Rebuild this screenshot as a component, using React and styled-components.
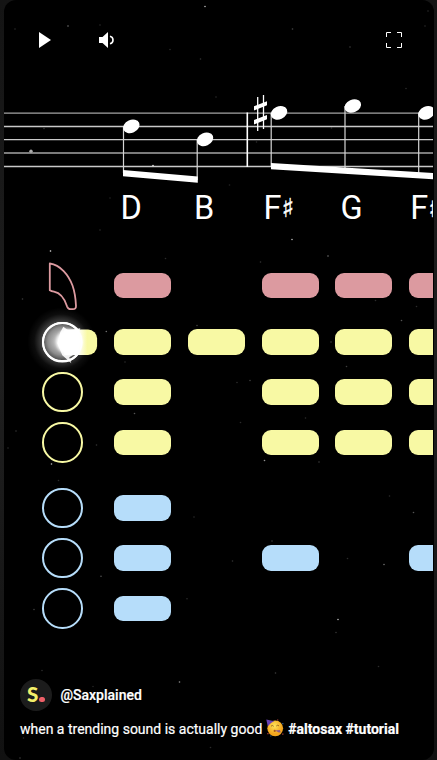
import React from "react";
import styled, { createGlobalStyle } from "styled-components";

const ROSE = "#dc9aa0";
const LEMON = "#f8f9a4";
const SKY = "#b6ddfa";

const GlobalStyle = createGlobalStyle`
  *, *::before, *::after { box-sizing: border-box; }
  body {
    margin: 0;
    font-family: Roboto, "Liberation Sans", sans-serif;
    color: #fff;
    overflow: hidden;
  }
`;

const Page = styled.div`
  height: 760px;
  padding: 0 3px 0 4px;
  background: linear-gradient(#141414, #1f1f1f 50%, #111);
`;

const Player = styled.main`
  position: relative;
  height: 760px;
  display: flex;
  flex-direction: column;
  overflow: hidden;
  border-radius: 12px;
  background: #000;
  border-right: 1px solid #000;
`;

const Sky = styled.svg`
  position: absolute;
  inset: 0;
  width: 429px;
  height: 760px;
  pointer-events: none;
`;

const Controls = styled.div`
  height: 80px;
  flex: none;
  display: flex;
  align-items: center;
  padding: 0 27px 0 28px;
`;

const IconButton = styled.button`
  width: 24px;
  height: 24px;
  padding: 0;
  border: 0;
  background: none;
  color: #fff;
  margin-left: ${(p) => p.$gap || "0"};
  svg { display: block; }
`;

const Staff = styled.svg`
  display: block;
  flex: none;
  width: 429px;
  height: 110px;
`;

const NoteNames = styled.div`
  display: grid;
  grid-template-columns: repeat(5, 73.75px);
  flex: none;
  height: 56px;
  padding-left: 115.6px;
  font-size: 32.5px;
  line-height: 36px;
`;

const NoteName = styled.span`
  display: flex;
  white-space: nowrap;
  margin-left: ${(p) => p.$shift || 0}px;
`;

const Sharp = styled.span`
  font-family: "DejaVu Sans", sans-serif;
  font-size: 26px;
  -webkit-text-stroke: 0.4px #fff;
`;

const Chart = styled.section`
  flex: none;
  display: flex;
  flex-direction: column;
  padding-top: 8.6px;
`;

const Lane = styled.div`
  height: ${(p) => p.$height || 50.35}px;
  margin-top: ${(p) => p.$gap || 0}px;
  display: grid;
  grid-template-columns: 71.8px repeat(5, 73.75px);
  align-items: center;
  padding-left: 38.3px;
  color: ${(p) => p.$tone};
`;

const KeyRing = styled.div`
  position: relative;
  width: 40.5px;
  height: 40.5px;
  border: 2px solid ${(p) => (p.$lit ? "#fff" : "currentColor")};
  border-radius: 50%;
`;

const Pad = styled.div`
  width: 57px;
  height: 25.5px;
  border-radius: 9px;
  background: ${(p) => (p.$on ? "currentColor" : "transparent")};
`;

const Flash = styled.svg`
  position: absolute;
  left: -24px;
  top: -22px;
  width: 84px;
  height: 80px;
`;

const Details = styled.footer`
  margin-top: auto;
  padding: 0 16px 21px;
`;

const Channel = styled.div`
  display: flex;
  align-items: center;
  gap: 8.5px;
  height: 32px;
  font-size: 14px;
  font-weight: 500;
  -webkit-text-stroke: 0.2px #fff;
`;

const Avatar = styled.div`
  display: flex;
  align-items: baseline;
  justify-content: center;
  width: 32px;
  height: 32px;
  border-radius: 50%;
  background: #1c1c1c;
  color: #f4f06a;
  font: 900 20.5px/30px Lato, sans-serif;
  -webkit-text-stroke: 0;
  gap: 1px;
`;

const Dot = styled.i`
  flex: none;
  width: 5.5px;
  height: 5.5px;
  border-radius: 50%;
  background: #ee6068;
`;

const Caption = styled.p`
  display: flex;
  align-items: center;
  margin: 8px 0 0;
  height: 20px;
  font-size: 14px;
  line-height: 20px;
  white-space: pre;
  -webkit-text-stroke: 0.2px #fff;
`;

const Tag = styled.b`
  font-weight: 700;
`;

const Emoji = styled.svg`
  width: 18px;
  height: 18px;
  margin: -3px 4.5px 0 3.5px;
`;

const stars = [
  [205, 6.5, 0.8], [68, 26, 0.6], [15, 29, 0.3], [100, 25, 0.3], [170, 49.5, 0.3], [200.5, 59, 0.35],
  [216, 97, 0.3], [292.5, 29, 0.45], [350, 47, 0.4], [406, 88.5, 0.3], [425, 26, 0.3], [428, 11, 0.3],
  [44, 128.5, 0.35], [153, 165.5, 0.9], [110, 198, 0.25], [100, 230, 0.3], [256.5, 142, 0.3], [331.5, 128, 0.3],
  [229.5, 185, 0.25], [292, 239.5, 0.8], [50.5, 251, 0.9], [165.5, 258.5, 0.3], [22.5, 299, 0.4],
  [106.3, 331.5, 0.6], [197, 325.5, 0.4], [260.5, 262, 0.35], [328, 256, 0.6], [375.5, 300.5, 0.3],
  [416.5, 306.5, 0.3], [401.5, 320.5, 0.5], [331, 342, 0.4], [346.5, 366.5, 0.4], [250, 380.5, 0.4],
  [237, 382.5, 0.3], [125, 362, 0.3], [134.5, 413.5, 0.5], [16, 431, 0.35], [8, 448, 0.3], [96.5, 445, 0.35],
  [51.5, 464, 0.8], [58.5, 480.5, 0.3], [305.5, 418, 0.3], [240.5, 422.5, 0.3], [264.5, 460.5, 0.7],
  [319, 462, 0.4], [194, 517, 0.3], [101, 576.3, 0.5], [187, 598.7, 0.3], [34, 609.5, 0.4],
  [389.5, 496, 0.3], [413.5, 512.5, 0.5], [272, 541, 0.4], [232.5, 561, 0.35], [384, 564.5, 0.6],
  [347.5, 558.5, 0.3], [338, 619.5, 0.8], [336, 632.5, 0.35], [179.5, 682, 0.7], [42, 670.5, 0.3],
  [93, 686.5, 0.25], [23.5, 738, 0.3], [20, 758, 0.4], [210.5, 747.5, 0.3], [275.5, 673, 0.4], [378.5, 666.5, 0.3],
];

const lanes = [
  { tone: ROSE, on: [1, 0, 1, 1, 1], thumb: true, height: 62 },
  { tone: LEMON, on: [1, 1, 1, 1, 1], lit: true },
  { tone: LEMON, on: [1, 0, 1, 1, 1] },
  { tone: LEMON, on: [1, 0, 1, 1, 1] },
  { tone: SKY, on: [1, 0, 0, 0, 0], gap: 15 },
  { tone: SKY, on: [1, 0, 1, 0, 1] },
  { tone: SKY, on: [1, 0, 0, 0, 0] },
];

const heads = [
  [131.3, 126.3, 173], [205, 139.3, 180], [279, 112.8, 167], [352.8, 106, 170], [426.5, 112.8, 174],
];

function Starfield() {
  return (
    <Sky viewBox="4 0 429 760">
      {stars.map(([x, y, o]) => (
        <circle key={`${x}-${y}`} cx={x} cy={y} r=".8" fill="#fff" opacity={o * o + 0.08} />
      ))}
    </Sky>
  );
}

function Score() {
  return (
    <Staff viewBox="4 80 429 110">
      {[113.2, 126.5, 139.6, 153, 166.5].map((y, i) => (
        <path key={y} d={`M4 ${y}H433`} stroke={i === 0 || i === 3 ? "#a5a5a5" : "#c9c9c9"} strokeWidth="1.3" />
      ))}
      <circle cx="31" cy="151.2" r="1.7" fill="#aaa" />
      <path d="M247.3 112.5V167" stroke="#fff" strokeWidth="1.6" />
      {heads.map(([x, y, end]) => (
        <g key={x} fill="#fff">
          <path d={`M${x - 7.8} ${y}V${end}`} stroke="#d5d5d5" strokeWidth="1.2" />
          <ellipse cx={x} cy={y} rx="8.6" ry="6.4" transform={`rotate(-24 ${x} ${y})`} />
        </g>
      ))}
      <path d="M123 170L197.8 176.6V182.8L123 176.2ZM271 163L433 173V179.2L271 169.3Z" fill="#fff" />
      <path d="M257.7 97V131M263.5 95V129" stroke="#fff" strokeWidth="1.3" />
      <path d="M254 106.2L267 101.2V105.3L254 110.4ZM254 120L267 115V119.2L254 124.4Z" fill="#fff" />
    </Staff>
  );
}

function ThumbKey() {
  return (
    <svg width="42" height="50" viewBox="42.5 260.5 42 50" fill="none" stroke="currentColor" strokeWidth="1.8" strokeLinejoin="round">
      <path d="M50.3 263C61 264.5 69 274.5 73 285C75.5 292 76.2 299 76.5 305.5Q76.6 308.6 73.5 308.6H71Q68.7 308.6 67.5 305.8C65 298 61.3 292.5 54.5 291.2Q52 290.8 50.3 289.7Z" />
    </svg>
  );
}

function KeyFlash() {
  return (
    <Flash viewBox="20.7 301.7 84 80">
      <defs>
        <radialGradient id="halo">
          <stop offset="0" stopColor="#fff" stopOpacity=".9" />
          <stop offset=".4" stopColor="#fff" stopOpacity=".55" />
          <stop offset=".6" stopColor="#fff" stopOpacity=".22" />
          <stop offset=".8" stopColor="#fff" stopOpacity=".05" />
          <stop offset="1" stopColor="#fff" stopOpacity="0" />
        </radialGradient>
        <linearGradient id="tail">
          <stop offset="0" stopColor="#fff" />
          <stop offset=".42" stopColor="#fff" />
          <stop offset=".7" stopColor={LEMON} />
        </linearGradient>
        <filter id="soft" x="-40%" y="-40%" width="180%" height="180%">
          <feGaussianBlur stdDeviation="1.8" />
        </filter>
      </defs>
      <circle cx="62" cy="341" r="34" fill="url(#halo)" />
      <path d="M65 329.2H88.8A9 9 0 0 1 97.8 338.2V345.7A9 9 0 0 1 88.8 354.7H65Z" fill="url(#tail)" />
      <ellipse cx="70" cy="341.5" rx="13" ry="12.5" fill="#fff" filter="url(#soft)" />
      <path d="M61 332L64 326.5L69 330L81 328L79 334L75 354L70 357L72 363L63 355L58 343Z" fill="#fff" opacity=".9" />
      <circle cx="63" cy="342" r="19.3" fill="none" stroke="#fff" strokeWidth="2" />
    </Flash>
  );
}

function PartyFace() {
  return (
    <Emoji viewBox="0 0 18 18">
      <defs>
        <radialGradient id="face" cx=".45" cy=".35">
          <stop offset="0" stopColor="#ffe45c" />
          <stop offset="1" stopColor="#f3a51d" />
        </radialGradient>
      </defs>
      <circle cx="9.2" cy="9.3" r="7.9" fill="url(#face)" />
      <path d="M.3.6L8.4 2.3Q4.4 3.4 1.8 7.6Z" fill="#6841b5" />
      <path d="M5 7.2Q6.4 5.7 7.7 7.3M10.3 7Q11.7 5.5 13 6.9" fill="none" stroke="#8a5714" strokeWidth=".8" />
      <circle cx="8.7" cy="11.9" r="1.1" fill="#a8561c" />
      <path d="M9 11.5L13.8 11L14.8 13.2L12.8 13.6Z" fill="#8b5a8e" />
      <path d="M11 .6h1.3v1H11zM1.2 14h1.4v1.3H1.2z" fill="#a83b36" />
      <path d="M16.2 4h1.2v1.3h-1.2zM4.2 16.5h1.2v1H4.2z" fill="#2d5f99" />
      <path d="M16 14.4h1.5v1.4H16z" fill="#963a35" />
    </Emoji>
  );
}

export default function App() {
  return (
    <>
      <GlobalStyle />
      <Page>
        <Player>
          <Starfield />
          <Controls>
            <IconButton aria-label="Play">
              <svg width="24" height="24" viewBox="0 0 24 24" fill="currentColor"><path d="M7 4L19 12L7 20Z" /></svg>
            </IconButton>
            <IconButton aria-label="Mute" $gap="40px">
              <svg width="24" height="24" viewBox="0 0 24 24" fill="currentColor">
                <path d="M3 9H6.5L12 4V20L6.5 15H3Z" />
                <path d="M14 8.2Q17 9 17 12T14 15.8" fill="none" stroke="currentColor" strokeWidth="1.6" />
              </svg>
            </IconButton>
            <IconButton aria-label="Full screen" $gap="auto">
              <svg width="24" height="24" viewBox="0 0 24 24" fill="none" stroke="currentColor">
                <path d="M4.5 9V4.5H9M15 4.5H19.5V9M19.5 15V19.5H15M9 19.5H4.5V15" />
              </svg>
            </IconButton>
          </Controls>
          <Score />
          <NoteNames>
            <NoteName $shift={0.8}>D</NoteName>
            <NoteName $shift={0.6}>B</NoteName>
            <NoteName $shift={-3.7}>F<Sharp>♯</Sharp></NoteName>
            <NoteName $shift={-0.4}>G</NoteName>
            <NoteName $shift={-4.3}>F<Sharp>♯</Sharp></NoteName>
          </NoteNames>
          <Chart>
            {lanes.map((lane, i) => (
              <Lane key={i} $tone={lane.tone} $gap={lane.gap} $height={lane.height}>
                {lane.thumb ? <ThumbKey /> : <KeyRing $lit={lane.lit}>{lane.lit && <KeyFlash />}</KeyRing>}
                {lane.on.map((on, n) => <Pad key={n} $on={on} />)}
              </Lane>
            ))}
          </Chart>
          <Details>
            <Channel>
              <Avatar>S<Dot /></Avatar>
              <span>@Saxplained</span>
            </Channel>
            <Caption>
              <span>when a trending sound is actually good</span>
              <PartyFace />
              <Tag>#altosax #tutorial</Tag>
            </Caption>
          </Details>
        </Player>
      </Page>
    </>
  );
}
